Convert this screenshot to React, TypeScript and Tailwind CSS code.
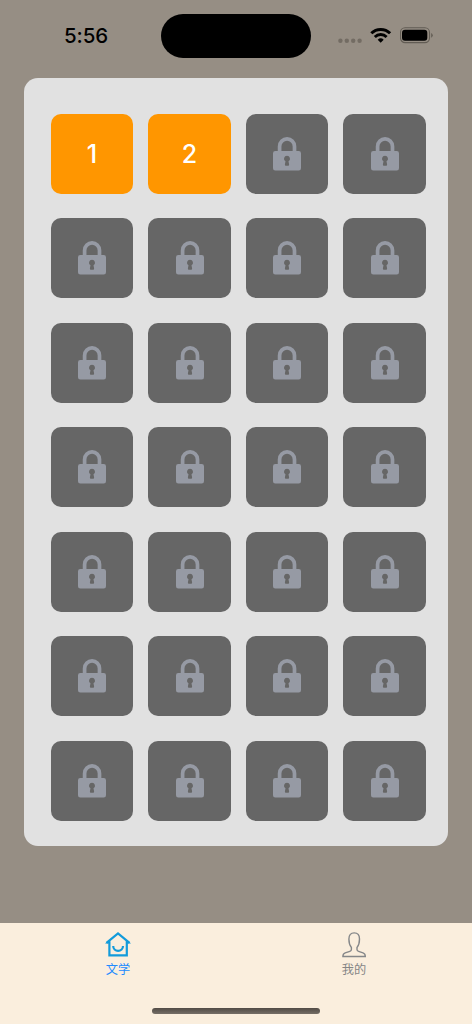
import React from "react";

function LockIcon() {
  return (
    <svg width="28" height="34" viewBox="0 0 28 34" fill="none" aria-hidden="true">
      <path d="M6.600 15V9.400a7.450 7.450 0 0 1 14.900 0V15" stroke="#969aa4" strokeWidth="3.700" />
      <path
        fillRule="evenodd"
        clipRule="evenodd"
        fill="#969aa4"
        d="M2.3 14h23.4A2.3 2.3 0 0 1 28 16.300v15a2.3 2.3 0 0 1-2.3 2.3H2.3A2.3 2.3 0 0 1 0 31.300v-15a2.3 2.3 0 0 1 2.3-2.3ZM14 18.700a3 3 0 0 0-1.500 5.600l-.6 3.200q-.1 1.200 1 1.200h2.200q1.100 0 1-1.200l-.6-3.200A3 3 0 0 0 14 18.700Z"
      />
    </svg>
  );
}

function StatusBar() {
  return (
    <header className="flex h-[77.500px] items-start">
      <div className="w-[161px] pt-[21px] pl-[64px] text-[20.500px] leading-[30px] font-medium tracking-[-0.1px] text-black">
        5:56
      </div>
      <div className="mt-[13.700px] h-[44.200px] w-[150px] rounded-full bg-black" />
      <div className="mt-[27px] ml-[27px] flex h-4 items-start">
        <svg width="24" height="16" viewBox="0 0 24 16" fill="#736c63" aria-hidden="true">
          <circle cx="2.400" cy="13.800" r="2.200" />
          <circle cx="8.800" cy="13.800" r="2.200" />
          <circle cx="15.200" cy="13.800" r="2.200" />
          <circle cx="21.600" cy="13.800" r="2.200" />
        </svg>
        <svg className="ml-2" width="22" height="16" viewBox="0 0 22 16" fill="none" stroke="#000" aria-hidden="true">
          <path d="M1.300 6.300a13.300 13.300 0 0 1 18.800 0" strokeWidth="3" />
          <path d="M4.800 9.900a8.300 8.300 0 0 1 11.800 0" strokeWidth="2.900" />
          <path d="M10.700 15.800 7.700 12.700a4.300 4.300 0 0 1 6 0Z" fill="#000" stroke="none" />
        </svg>
        <svg className="ml-[8px]" width="34" height="17" viewBox="0 0 34 17" fill="none" aria-hidden="true">
          <rect x="0.500" y="0.800" width="29" height="14.800" rx="4.600" stroke="#625c54" strokeWidth="1.100" />
          <rect x="2" y="2.800" width="25.300" height="11" rx="3" fill="#000" />
          <path d="M31.200 6v4.700q1.500-.7 1.500-2.350T31.200 6Z" fill="#625c54" />
        </svg>
      </div>
    </header>
  );
}

function LevelTile({ level }: { level: number }) {
  if (level <= 2) {
    return (
      <button
        aria-label={`${level}`}
        className="flex h-full w-full items-center justify-center rounded-[10px] bg-[#ff9600] pt-[2px] text-[25px] leading-none font-medium text-white"
      >
        {level}
      </button>
    );
  }
  return (
    <button className="flex h-full w-full items-center justify-center rounded-[10px] bg-[#666666]" disabled>
      <LockIcon />
    </button>
  );
}

function HomeIcon() {
  return (
    <svg width="26" height="26" viewBox="0 0 26 26" fill="none" stroke="#129bdb" aria-hidden="true">
      <path d="M1.500 10.800 13 1.500 24.500 10.800M4.400 9v14.400h17.400V9" strokeWidth="2.200" />
      <path d="M0 11.600 4 8v3.600ZM26 11.600 22 8v3.600Z" fill="#129bdb" stroke="none" />
      <path d="M8.200 14a4.900 4.900 0 0 0 9.800 0" strokeWidth="2.200" />
    </svg>
  );
}

function ProfileIcon() {
  return (
    <svg width="24" height="26" viewBox="0 0 24 26" fill="none" stroke="#858789" strokeWidth="1.400" aria-hidden="true">
      <path d="M9.400 15.500C7.700 13.500 6.900 11 6.900 7 6.900 2.800 8.900.9 12.200.9s5.300 1.900 5.300 6.100c0 4-.8 6.500-2.500 8.500v2.100c0 .9.400 1.400 1.600 1.800l4.400 1.500c1.600.6 2.300 1.500 2.300 3.600H.9c0-2.100.7-3 2.300-3.600l4.600-1.500c1.200-.4 1.600-.9 1.600-1.800Z" />
    </svg>
  );
}

export default function App() {
  return (
    <div className="flex h-[1024px] w-[472px] flex-col overflow-hidden bg-[#968e84] font-['Inter','Noto_Sans_CJK_SC',sans-serif]">
      <StatusBar />
      <main className="flex-1">
        <div className="mx-6 grid h-[768px] grid-cols-4 grid-rows-7 gap-x-[15px] gap-y-[24.100px] rounded-[14px] bg-[#e1e1e1] pt-[36px] pr-[22px] pb-[24.500px] pl-[26.700px]">
          {Array.from({ length: 28 }, (_, index) => (
            <LevelTile key={index} level={index + 1} />
          ))}
        </div>
      </main>
      <nav className="h-[101px] bg-[#faeedd]">
        <div className="grid h-[85px] grid-cols-2 text-[12.200px] leading-[16px]">
          <a className="flex flex-col items-center pt-[9px] text-[#228bff]">
            <HomeIcon />
            <span className="mt-[4px]">文学</span>
          </a>
          <a className="flex flex-col items-center pt-[9px] text-[#858585]">
            <ProfileIcon />
            <span className="mt-[4px]">我的</span>
          </a>
        </div>
        <div className="mx-auto h-[6px] w-[168px] rounded-full bg-linear-to-b from-[#514b45] to-[#756e66]" />
      </nav>
    </div>
  );
}
